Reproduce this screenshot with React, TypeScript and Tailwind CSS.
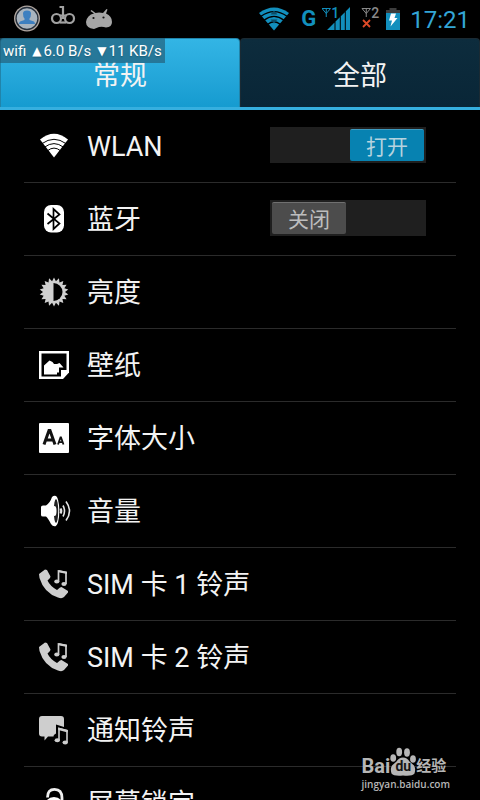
import { useState } from "react";
import type { ReactNode } from "react";

const starPoints = Array.from({ length: 36 }, (_, i) => {
  const r = i % 2 === 0 ? 14.5 : 11;
  const a = (i * Math.PI) / 18 - Math.PI / 2;
  return `${(15 + r * Math.cos(a)).toFixed(2)},${(15 + r * Math.sin(a)).toFixed(2)}`;
}).join(" ");

function Icon({ children }: { children: ReactNode }) {
  return (
    <svg viewBox="0 0 30 30" className="size-[30px] shrink-0 overflow-visible" aria-hidden="true">
      {children}
    </svg>
  );
}

function WlanIcon() {
  return (
    <Icon>
      <path d="M1 8.5Q15-3 29 8.5L15 26.5Z" fill="#fff" />
      <g fill="none" stroke="#000" strokeWidth="1">
        <path d="M3 12.6Q15 4 27 12.6" />
        <path d="M5.5 16.2Q15 9 24.5 16.2" />
        <path d="M8.5 19.7Q15 14.5 21.5 19.7" />
      </g>
    </Icon>
  );
}

function BluetoothIcon() {
  return (
    <Icon>
      <rect x="5" y="1" width="20" height="27.5" rx="7" fill="#fff" />
      <path d="M8.5 9.5L20.5 19.5L14.5 25V5L20.5 10.5L8.5 20" fill="none" stroke="#000" strokeWidth="1.7" />
    </Icon>
  );
}

function BrightnessIcon() {
  return (
    <Icon>
      <polygon points={starPoints} fill="#d0d0d0" />
      <path d="M14.5 6A9 9 0 0 1 14.5 24Z" fill="#000" />
    </Icon>
  );
}

function WallpaperIcon() {
  return (
    <Icon>
      <path d="M0 1H30V22.5L24 29H0Z" fill="#fff" />
      <path d="M2.5 3.5H27.5V20H22V26.5H2.5Z" fill="#000" />
      <path d="M5 24.5V15.5L10.5 10.5L13.5 12L15 14H18L20.5 13L24.5 17.5H20V22.5H18V24.5Z" fill="#fff" />
    </Icon>
  );
}

function FontSizeIcon() {
  return (
    <Icon>
      <rect width="30" height="30" rx="1" fill="#fff" />
      <g fill="none" stroke="#111" strokeWidth="3">
        <path d="M5 21.5L10 7.5H11L16 21.5M7 17H14" />
        <path d="M19 21.5L21.5 14.5H22L24.5 21.5M20 19.2H24" strokeWidth="1.8" />
      </g>
    </Icon>
  );
}

function VolumeIcon() {
  return (
    <Icon>
      <ellipse cx="16.5" cy="15" rx="3.8" ry="15" fill="#fff" />
      <path d="M2 11Q2 9.5 4 9.5H7Q11 7 13 1Q15-1 17 0V30Q14 31 12 28Q9 22 7 20.5H4Q2 20.5 2 19Z" fill="#fff" />
      <ellipse cx="17" cy="15" rx="2.2" ry="12" fill="#222" />
      <ellipse cx="15.5" cy="15" rx="2" ry="5" fill="#fff" />
      <g fill="none" stroke="#e4e4e4" strokeWidth="1.6">
        <path d="M21.5 12.5Q23 15 21.5 17.5" strokeWidth="2.2" />
        <path d="M24 9.5Q27 15 24 20.5" />
        <path d="M27 5.5Q34 15 27 24.5" />
      </g>
    </Icon>
  );
}

function RingtoneIcon() {
  return (
    <Icon>
      <path
        d="M0 5L6 .5L8 1L11.5 7.5L11 9L8.5 11.5Q11 17 18 21L21 18.5L22.5 18L29 22V23.5L25 28Q23 30 19 28.5Q5 24 .5 9Z"
        fill="#cecece"
      />
      <path d="M19.5 12.5V2L27 3.5V15" fill="none" stroke="#cecece" strokeWidth="1.7" />
      <path d="M19.5 1L28 2.8V5L19.5 3.2Z" fill="#cecece" />
      <ellipse cx="17.8" cy="12.5" rx="2.6" ry="2" fill="#cecece" />
      <ellipse cx="25" cy="15" rx="2.6" ry="2" fill="#cecece" />
    </Icon>
  );
}

function NotificationIcon() {
  return (
    <Icon>
      <path d="M3 1H22Q25 1 25 4V12L17 9.5V18.5Q14 20 14.5 21.5H9L5.5 25.5V21.5H3Q0 21.5 0 18.5V4Q0 1 3 1Z" fill="#cecece" />
      <path d="M20 25V13.5L28 15.5V27.5" fill="none" stroke="#cecece" strokeWidth="1.6" />
      <path d="M19.2 12.5L28.8 15V17.5L19.2 15Z" fill="#cecece" />
      <ellipse cx="18.3" cy="25.2" rx="2.7" ry="2" fill="#cecece" />
      <ellipse cx="26.2" cy="27.5" rx="2.7" ry="2" fill="#cecece" />
    </Icon>
  );
}

function LockIcon() {
  return (
    <Icon>
      <path d="M8.5 9.5Q8.5 1.3 15.5 1.3Q23 1.3 23 10V18" fill="none" stroke="#f0f0f0" strokeWidth="2.8" />
      <circle cx="15" cy="19" r="10" fill="#fff" />
    </Icon>
  );
}

function Switch({ label, initial }: { label: string; initial: boolean }) {
  const [on, setOn] = useState(initial);
  return (
    <button
      type="button"
      role="switch"
      aria-checked={on}
      aria-label={label}
      onClick={() => setOn(!on)}
      className={`mb-0.5 flex h-9 w-[156px] bg-[#1f1f1f] p-0.5 ${on ? "justify-end" : "justify-start"}`}
    >
      <span
        className={`flex h-8 w-[74px] items-center justify-center rounded-xs border-t pt-0.5 text-[21px] leading-8 ${
          on ? "border-[#3d9abf] bg-[#0782b1] text-[#b5d3df]" : "border-[#707070] bg-[#4c4c4c] text-[#bdbdbd]"
        }`}
      >
        {on ? "打开" : "关闭"}
      </span>
    </button>
  );
}

const rows: { label: string; icon: ReactNode; on?: boolean }[] = [
  { label: "WLAN", icon: <WlanIcon />, on: true },
  { label: "蓝牙", icon: <BluetoothIcon />, on: false },
  { label: "亮度", icon: <BrightnessIcon /> },
  { label: "壁纸", icon: <WallpaperIcon /> },
  { label: "字体大小", icon: <FontSizeIcon /> },
  { label: "音量", icon: <VolumeIcon /> },
  { label: "SIM 卡 1 铃声", icon: <RingtoneIcon /> },
  { label: "SIM 卡 2 铃声", icon: <RingtoneIcon /> },
  { label: "通知铃声", icon: <NotificationIcon /> },
  { label: "屏幕锁定", icon: <LockIcon /> },
];

function StatusBar() {
  return (
    <header className="flex h-[38px] shrink-0 items-center justify-between pr-2.5 pl-3.5">
      <div className="flex items-center gap-2.5">
        <svg viewBox="0 0 26 28" className="h-7 w-[26px]" aria-hidden="true">
          <circle cx="13" cy="13.5" r="13" fill="#b0a6a0" />
          <circle cx="13" cy="13.5" r="11" fill="#a9b4bf" stroke="#26303c" strokeWidth="1.3" />
          <path d="M9 8.5Q9 5.500 13 5.500T17 8.500Q17 12 15.500 13.500V15L20 16.500Q21 17.500 21 19H5Q5 17.500 6 16.500L10.500 15V13.500Q9 12 9 8.500Z" fill="#3d7fc0" />
        </svg>
        <svg viewBox="0 0 26 28" className="h-7 w-[26px]" aria-hidden="true">
          <g fill="none" stroke="#a2a2a2" strokeWidth="2.2">
            <circle cx="6.5" cy="13.5" r="4.5" />
            <circle cx="19.5" cy="13.5" r="4.5" />
            <path d="M9.5 2H13V14M9.5 10.5H16.500" />
            <path d="M9.5 17.500H16.500" />
          </g>
        </svg>
        <svg viewBox="0 0 26 28" className="h-7 w-[26px]" aria-hidden="true">
          <path d="M0 17Q1 10 8 8.5L4.500 6L5.500 5L9.500 8Q13 7 17 8L20.500 4L21.500 4.500L20 8.500Q26 11 26 17Q26 22 20 22.500Q17 21.500 13 22L8 24Q0 23 0 17Z" fill="#a6a6a6" />
          <circle cx="7.500" cy="13" r="1.1" fill="#111" />
          <circle cx="17.500" cy="12.500" r="1.1" fill="#111" />
        </svg>
      </div>
      <div className="flex items-center">
        <svg viewBox="0 0 30 24" className="mr-3 h-6 w-[30px]" aria-hidden="true">
          <path d="M0 6Q15-5 30 6L15 23.5Z" fill="#128fbd" />
          <g fill="none" stroke="#000" strokeWidth="1.4">
            <path d="M2 9.3Q15 0 28 9.3" />
            <path d="M5 13.3Q15 5.5 25 13.3" />
            <path d="M8.5 17.5Q15 12 21.5 17.5" />
          </g>
          <path d="M15 3.500L18.500 7.500H11.500ZM15 16.500L11.500 12.500H18.500Z" fill="#0a4d68" />
        </svg>
        <span className="mr-1.5 text-[22px] leading-6 font-bold text-[#128fbd]">G</span>
        <span className="relative mr-3 block h-6 w-7">
          <svg viewBox="0 0 28 24" className="h-6 w-7" aria-hidden="true">
            <path d="M5 23L12.500 15.500V23ZM13.500 23V14.500L17.800 10.200V23ZM18.800 23V9.200L22.800 5.200V23ZM23.800 23V4.200L28 0V23Z" fill="#128fbd" />
            <path d="M0 1.500H8.500L4.250 6.500ZM4.250 1V10" fill="none" stroke="#128fbd" strokeWidth="1" />
          </svg>
          <span className="absolute top-0 left-[9px] text-sm leading-3 font-medium text-[#128fbd]">1</span>
        </span>
        <span className="relative mr-2 block h-6 w-4">
          <svg viewBox="0 0 16 24" className="h-6 w-4 overflow-visible" aria-hidden="true">
            <path d="M0 1.500H8.500L4.250 6.500ZM4.250 1V10" fill="none" stroke="#8a8a8a" strokeWidth="1" />
            <path d="M1 13L8 20M8 13L1 20" stroke="#dd4a28" strokeWidth="1.8" />
          </svg>
          <span className="absolute top-0 left-[9px] text-sm leading-3 font-medium text-[#8a8a8a]">2</span>
        </span>
        <svg viewBox="0 0 14 22" className="mr-2.5 h-[22px] w-3.5" aria-hidden="true">
          <path d="M3.5 0H10.5V2H14V5H0V2H3.5Z" fill="#3d3d3d" />
          <path d="M0 5H14V22H0Z" fill="#128fbd" />
          <path d="M5 5.5H10L8.5 10H11.5L4.5 18.5L6 12.5H3Z" fill="#fff" />
        </svg>
        <time className="pt-0.5 text-2xl leading-9 text-[#33a5d6]">17:21</time>
      </div>
    </header>
  );
}

function Watermark() {
  return (
    <div className="absolute right-[30px] bottom-2.5 text-[#b6b6b6]">
      <div className="flex items-end text-xl leading-6 font-bold">
        <span>Bai</span>
        <span className="relative flex h-8 w-[26px] items-end justify-center">
          <svg viewBox="0 0 26 32" className="absolute inset-0 h-8 w-[26px]" aria-hidden="true">
            <g fill="#b6b6b6">
              <ellipse cx="3.2" cy="12" rx="2.9" ry="3.8" />
              <ellipse cx="9.2" cy="6" rx="2.9" ry="4.2" />
              <ellipse cx="17" cy="6.5" rx="2.9" ry="4.2" />
              <ellipse cx="23" cy="13" rx="2.900" ry="3.800" />
              <path d="M13 11.500Q17 11.500 19.500 15.500L24 19.500Q26 23 24.500 27.500Q22 30.500 13 29.500Q4 30.500 1.500 27.500Q0 23 2 19.500L6.500 15.500Q9 11.500 13 11.500Z" />
            </g>
          </svg>
          <span className="relative text-sm leading-6 text-[#151515]">du</span>
        </span>
        <span className="text-[15px] leading-6">经验</span>
      </div>
      <div className="font-['Open_Sans',sans-serif] text-[10px] leading-3 font-semibold">jingyan.baidu.com</div>
    </div>
  );
}

export default function App() {
  const [tab, setTab] = useState(0);
  return (
    <div className="relative flex h-screen flex-col overflow-hidden bg-black font-[Roboto,'Noto_Sans_CJK_SC',sans-serif] text-[#f3f3f3]">
      <StatusBar />
      <div role="tablist" className="flex h-[72px] shrink-0 border-b-3 border-[#36afdf]">
        {["常规", "全部"].map((name, i) => (
          <button
            key={name}
            type="button"
            role="tab"
            aria-selected={tab === i}
            onClick={() => setTab(i)}
            className={`flex-1 rounded-t-sm border-x border-t pt-1.5 text-[27px] leading-8 ${
              tab === i
                ? "border-[#2184aa] bg-linear-to-b from-[#33b5e5] to-[#159bd0]"
                : "border-[#1b2a33] bg-linear-to-b from-[#0d2c3d] to-[#092637]"
            }`}
          >
            {name}
          </button>
        ))}
      </div>
      <ul className="min-h-0 flex-1 overflow-hidden px-6">
        {rows.map((row) => (
          <li key={row.label} className="flex h-[73px] items-center border-b border-[#2b2b2b] pr-[30px] pl-[15px]">
            <button type="button" className="flex h-full flex-1 items-center gap-[18px] text-left text-[27px] leading-8">
              {row.icon}
              <span className="pt-0.5">{row.label}</span>
            </button>
            {row.on !== undefined && <Switch label={row.label} initial={row.on} />}
          </li>
        ))}
      </ul>
      <div className="absolute top-[38px] left-0 flex h-[25px] items-center gap-1.5 bg-[#235b73]/65 pr-[3px] pl-[3px] text-[15px] leading-6 whitespace-nowrap text-white text-shadow-sm">
        <span>wifi</span>
        <span className="flex items-center gap-0.5">
          <span className="font-['DejaVu_Sans',sans-serif] text-xs leading-5">▲</span>6.0 B/s
        </span>
        <span className="flex items-center gap-0.5">
          <span className="font-['DejaVu_Sans',sans-serif] text-xs leading-5">▼</span>11 KB/s
        </span>
      </div>
      <Watermark />
    </div>
  );
}
